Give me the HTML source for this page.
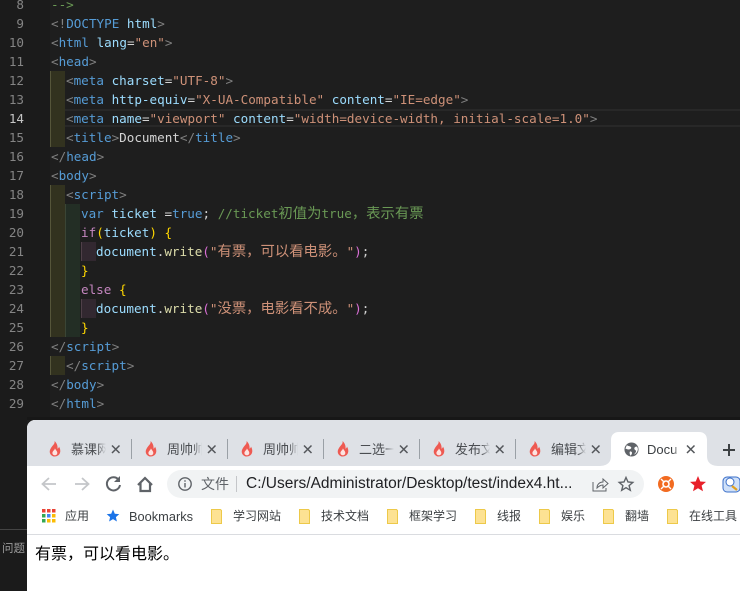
<!DOCTYPE html>
<html lang="zh"><head><meta charset="utf-8"><title>Document</title>
<style>
html,body{margin:0;padding:0;width:740px;height:591px;overflow:hidden;background:#1e1e1e}
#root{position:relative;width:740px;height:591px;overflow:hidden;background:#1e1e1e;font-family:"Liberation Sans","Noto Sans CJK SC",sans-serif}
.a{position:absolute}
.n,.l{position:absolute;height:19px;line-height:19px;font-family:"DejaVu Sans Mono","Noto Sans CJK SC",monospace;font-size:12.62px;white-space:pre}
.n{left:0;width:24px;text-align:right;color:#858585}
.z{font-family:"Noto Sans CJK SC",sans-serif;font-size:14.35px;line-height:0}
.g{color:#808080}.t{color:#569cd6}.at{color:#9cdcfe}.s{color:#ce9178}.c{color:#6a9955}.w{color:#d4d4d4}.k{color:#c586c0}.y{color:#ffd700}.f{color:#dcdcaa}.p{color:#da70d6}
.tb{position:absolute;top:441px;height:17px;width:35px;overflow:hidden;white-space:nowrap;font-size:13px;line-height:17px;color:#4a4d51;-webkit-mask-image:linear-gradient(to right,#000 75%,transparent);mask-image:linear-gradient(to right,#000 75%,transparent)}
.bm{position:absolute;top:508px;height:17px;line-height:17px;font-size:12px;color:#3c4043;white-space:nowrap}
.sep{position:absolute;top:439px;width:1px;height:20px;background:#9aa0a6}
svg{position:absolute;display:block}
</style></head><body><div id="root">

<div class="a" style="left:0;top:0;width:50px;height:420px;background:#1b1b1b"></div>
<div class="a" style="left:0;top:420px;width:27px;height:171px;background:#1b1b1b"></div>
<div class="a" style="left:51px;top:109px;width:689px;height:18px;box-sizing:border-box;border-top:2px solid #282828;border-bottom:2px solid #282828"></div>
<div class="a" style="left:50px;top:71px;width:15px;height:76px;background:#32321f;border-left:1px solid #55553a;box-sizing:border-box"></div>
<div class="a" style="left:50px;top:185px;width:15px;height:152px;background:#32321f;border-left:1px solid #55553a;box-sizing:border-box"></div>
<div class="a" style="left:65px;top:204px;width:15px;height:133px;background:#232e25;border-left:1px solid #3a4535;box-sizing:border-box"></div>
<div class="a" style="left:81px;top:242px;width:15px;height:19px;background:#322830;border-left:1px solid #4f4048;box-sizing:border-box"></div>
<div class="a" style="left:81px;top:299px;width:15px;height:19px;background:#322830;border-left:1px solid #4f4048;box-sizing:border-box"></div>
<div class="a" style="left:50px;top:356px;width:15px;height:19px;background:#32321f;border-left:1px solid #55553a;box-sizing:border-box"></div>

<div class="n" style="top:-5px">8</div><div class="l" style="left:51px;top:-5px"><span class="c">--&gt;</span></div>
<div class="n" style="top:14px">9</div><div class="l" style="left:51px;top:14px"><span class="g">&lt;!</span><span class="t">DOCTYPE</span> <span class="at">html</span><span class="g">&gt;</span></div>
<div class="n" style="top:33px">10</div><div class="l" style="left:51px;top:33px"><span class="g">&lt;</span><span class="t">html</span> <span class="at">lang</span><span class="w">=</span><span class="s">"en"</span><span class="g">&gt;</span></div>
<div class="n" style="top:52px">11</div><div class="l" style="left:51px;top:52px"><span class="g">&lt;</span><span class="t">head</span><span class="g">&gt;</span></div>
<div class="n" style="top:71px">12</div><div class="l" style="left:66px;top:71px"><span class="g">&lt;</span><span class="t">meta</span> <span class="at">charset</span><span class="w">=</span><span class="s">"UTF-8"</span><span class="g">&gt;</span></div>
<div class="n" style="top:90px">13</div><div class="l" style="left:66px;top:90px"><span class="g">&lt;</span><span class="t">meta</span> <span class="at">http-equiv</span><span class="w">=</span><span class="s">"X-UA-Compatible"</span> <span class="at">content</span><span class="w">=</span><span class="s">"IE=edge"</span><span class="g">&gt;</span></div>
<div class="n" style="top:109px;color:#c6c6c6">14</div><div class="l" style="left:66px;top:109px"><span class="g">&lt;</span><span class="t">meta</span> <span class="at">name</span><span class="w">=</span><span class="s">"viewport"</span> <span class="at">content</span><span class="w">=</span><span class="s">"width=device-width, initial-scale=1.0"</span><span class="g">&gt;</span></div>
<div class="n" style="top:128px">15</div><div class="l" style="left:66px;top:128px"><span class="g">&lt;</span><span class="t">title</span><span class="g">&gt;</span><span class="w">Document</span><span class="g">&lt;/</span><span class="t">title</span><span class="g">&gt;</span></div>
<div class="n" style="top:147px">16</div><div class="l" style="left:51px;top:147px"><span class="g">&lt;/</span><span class="t">head</span><span class="g">&gt;</span></div>
<div class="n" style="top:166px">17</div><div class="l" style="left:51px;top:166px"><span class="g">&lt;</span><span class="t">body</span><span class="g">&gt;</span></div>
<div class="n" style="top:185px">18</div><div class="l" style="left:66px;top:185px"><span class="g">&lt;</span><span class="t">script</span><span class="g">&gt;</span></div>
<div class="n" style="top:204px">19</div><div class="l" style="left:81px;top:204px"><span class="t">var</span> <span class="at">ticket</span> <span class="w">=</span><span class="t">true</span><span class="w">;</span> <span class="c">//ticket<span class="z">初值为</span>true<span class="z">，表示有票</span></span></div>
<div class="n" style="top:223px">20</div><div class="l" style="left:81px;top:223px"><span class="k">if</span><span class="y">(</span><span class="at">ticket</span><span class="y">)</span> <span class="y">{</span></div>
<div class="n" style="top:242px">21</div><div class="l" style="left:96px;top:242px"><span class="at">document</span><span class="w">.</span><span class="f">write</span><span class="p">(</span><span class="s">"<span class="z">有票，可以看电影。</span>"</span><span class="p">)</span><span class="w">;</span></div>
<div class="n" style="top:261px">22</div><div class="l" style="left:81px;top:261px"><span class="y">}</span></div>
<div class="n" style="top:280px">23</div><div class="l" style="left:81px;top:280px"><span class="k">else</span> <span class="y">{</span></div>
<div class="n" style="top:299px">24</div><div class="l" style="left:96px;top:299px"><span class="at">document</span><span class="w">.</span><span class="f">write</span><span class="p">(</span><span class="s">"<span class="z">没票，电影看不成。</span>"</span><span class="p">)</span><span class="w">;</span></div>
<div class="n" style="top:318px">25</div><div class="l" style="left:81px;top:318px"><span class="y">}</span></div>
<div class="n" style="top:337px">26</div><div class="l" style="left:51px;top:337px"><span class="g">&lt;/</span><span class="t">script</span><span class="g">&gt;</span></div>
<div class="n" style="top:356px">27</div><div class="l" style="left:66px;top:356px"><span class="g">&lt;/</span><span class="t">script</span><span class="g">&gt;</span></div>
<div class="n" style="top:375px">28</div><div class="l" style="left:51px;top:375px"><span class="g">&lt;/</span><span class="t">body</span><span class="g">&gt;</span></div>
<div class="n" style="top:394px">29</div><div class="l" style="left:51px;top:394px"><span class="g">&lt;/</span><span class="t">html</span><span class="g">&gt;</span></div>

<!-- bottom left panel -->
<div class="a" style="left:27px;top:417px;width:713px;height:3px;background:#171717"></div>
<div class="a" style="left:0;top:529px;width:27px;height:1px;background:#444"></div>
<div class="a" style="left:2px;top:541px;font-size:11.5px;line-height:16px;color:#9a9a9a">问题</div>

<!-- browser -->
<div class="a" style="left:27px;top:420px;width:713px;height:171px;background:#fff;border-top-left-radius:8px;overflow:hidden">
  <div class="a" style="left:0;top:0;width:713px;height:46px;background:#dee1e6"></div>
  <div class="a" style="left:0;top:114px;width:713px;height:1px;background:#dadce0"></div>
</div>

<!-- tab flames -->
<svg width="740" height="591" style="left:0;top:0" viewBox="0 0 740 591">
  <defs><g id="fl"><path d="M5.500 0C6.300 2.600 3.800 4.200 2.200 6.600.7 8.800.4 10.600 1 12.200c.8 2 2.600 3.300 4.700 3.300 2.400 0 4.600-1.400 5.300-3.600.7-2.100.2-4.400-1-6.300-.2 1-.7 1.700-1.500 2.100C8.900 4.700 7.700 2 5.500 0z" fill="#ee5a52"/><path d="M5.900 7.300c.2 1.500-2.300 2.600-2.500 4.500-.1 1.500 1.100 2.500 2.500 2.500s2.500-1 2.400-2.500c-.1-1.700-1.700-2.800-2.400-4.500z" fill="#fde3e0"/></g></defs>
  <use href="#fl" x="49" y="441"/><use href="#fl" x="145" y="441"/><use href="#fl" x="241" y="441"/><use href="#fl" x="337" y="441"/><use href="#fl" x="433" y="441"/><use href="#fl" x="529" y="441"/>
</svg>
<div class="tb" style="left:71px">慕课网</div>
<div class="tb" style="left:167px">周帅帅</div>
<div class="tb" style="left:263px">周帅帅</div>
<div class="tb" style="left:359px">二选一</div>
<div class="tb" style="left:455px">发布文</div>
<div class="tb" style="left:551px">编辑文</div>
<div class="sep" style="left:131px"></div><div class="sep" style="left:227px"></div><div class="sep" style="left:323px"></div><div class="sep" style="left:419px"></div><div class="sep" style="left:515px"></div>

<!-- active tab -->
<svg width="120" height="36" style="left:599px;top:432px" viewBox="0 0 120 36"><path d="M0 34c6 0 12-2 12-10V8c0-5 3-8 8-8h80c5 0 8 3 8 8v16c0 8 6 10 12 10z" fill="#fff"/></svg>
<svg width="15" height="15" style="left:624px;top:442px" viewBox="0 0 16 16"><circle cx="8" cy="8" r="7.500" fill="#5f6368"/><path d="M3 3.500c1.500 1 3.500.8 4.500 2S6.500 8 5 8 2.500 7 1.500 7zM14 5c-1.500-.5-3 .5-3 2s2 1.500 1.800 3-1.800 2.500-2.300 3.500c2.500-1 4-3 4.300-5.500.1-1.100-.3-2.100-.8-3zM6.500 10c1.200 0 2.300.7 2 2s-1 2-1.500 2.700C6.200 13.500 5.500 11 6.500 10z" fill="#fff"/></svg>
<div class="tb" style="left:647px;width:34px;color:#3c4043">Docu</div>

<!-- close icons -->
<svg width="740" height="591" style="left:0;top:0" viewBox="0 0 740 591"><g stroke="#54575b" stroke-width="1.500" fill="none">
<path d="M112 445.500l7.500 7.500M119.500 445.500l-7.500 7.500"/>
<path d="M208 445.500l7.500 7.500M215.500 445.500l-7.500 7.500"/>
<path d="M304 445.500l7.500 7.500M311.500 445.500l-7.500 7.500"/>
<path d="M400 445.500l7.500 7.500M407.500 445.500l-7.500 7.500"/>
<path d="M496 445.500l7.500 7.500M503.500 445.500l-7.500 7.500"/>
<path d="M592 445.500l7.500 7.500M599.500 445.500l-7.500 7.500"/>
<path d="M687 445.500l7.500 7.500M694.500 445.500l-7.500 7.500"/>
<path d="M729 444v12M723 450h12" stroke-width="2" stroke="#3c4043"/>
</g></svg>

<!-- toolbar -->
<div class="a" style="left:167px;top:470px;width:477px;height:28px;border-radius:14px;background:#f1f3f4"></div>
<svg width="740" height="591" style="left:0;top:0" viewBox="0 0 740 591">
  <g fill="none" stroke="#c4c6c9" stroke-width="1.800"><path d="M56 484H43M49 478l-6.500 6 6.500 6"/><path d="M75 484h13M82 478l6.500 6-6.500 6"/></g>
  <path d="M118.500 479.500a6.600 6.600 0 1 0 1.500 5.500" fill="none" stroke="#5f6368" stroke-width="2"/><path d="M120 476v6h-6z" fill="#5f6368"/>
  <path d="M138 485l7-7 7 7M140.500 483v8h9.500v-8" fill="none" stroke="#5f6368" stroke-width="2.200"/>
  <circle cx="185" cy="484" r="6.200" fill="none" stroke="#5f6368" stroke-width="1.400"/><path d="M185 483v4.500M185 480.300v1.500" stroke="#5f6368" stroke-width="1.400"/>
  <path d="M236.500 476v16" stroke="#c4c6c9"/>
  <path d="M593 482v9h13v-3" fill="none" stroke="#5f6368" stroke-width="1"/><path d="M597 488c0-4 3-6 6-6v-3l5 4.500-5 4.500v-3c-2 0-4 1-6 3z" fill="none" stroke="#5f6368" stroke-width="1"/>
  <path d="M626 477.500l2 4.500 4.800.4-3.700 3.200 1.200 4.700-4.300-2.600-4.300 2.600 1.200-4.700-3.700-3.200 4.800-.4z" fill="none" stroke="#5f6368" stroke-width="1.400"/>
  <circle cx="666" cy="484" r="8" fill="#f26b21"/><circle cx="666" cy="484" r="3" fill="none" stroke="#fff" stroke-width="1.600"/><path d="M661 479l2.500 2.500M671 479l-2.500 2.500M661 489l2.500-2.500M671 489l-2.500-2.500" stroke="#fff" stroke-width="1.400"/>
  <path d="M698 476l2.300 5.500 5.700.4-4.400 3.700 1.400 5.600-5-3-5 3 1.400-5.600-4.400-3.700 5.700-.4z" fill="#e8202a"/>
  <rect x="723" y="477" width="17" height="15" rx="4" fill="#cfe0f8" stroke="#3b6fc9"/><circle cx="730" cy="482" r="4" fill="#fff" stroke="#3b6fc9"/><path d="M732 486l5 4" stroke="#e0a020" stroke-width="2.200"/>
</svg>
<div class="a" style="left:201px;top:475px;font-size:14px;line-height:18px;color:#5f6368">文件</div>
<div class="a" style="left:246px;top:475px;font-size:15.5px;line-height:18px;color:#202124;white-space:nowrap">C:/Users/Administrator/Desktop/test/index4.ht...</div>

<!-- bookmarks -->
<svg width="740" height="591" style="left:0;top:0" viewBox="0 0 740 591">
  <g>
  <rect x="42" y="509" width="3.500" height="3.500" fill="#ea4335"/><rect x="47" y="509" width="3.500" height="3.500" fill="#ea4335"/><rect x="52" y="509" width="3.500" height="3.500" fill="#ea4335"/>
  <rect x="42" y="514" width="3.500" height="3.500" fill="#34a853"/><rect x="47" y="514" width="3.500" height="3.500" fill="#4285f4"/><rect x="52" y="514" width="3.500" height="3.500" fill="#fbbc05"/>
  <rect x="42" y="519" width="3.500" height="3.500" fill="#34a853"/><rect x="47" y="519" width="3.500" height="3.500" fill="#fbbc05"/><rect x="52" y="519" width="3.500" height="3.500" fill="#fbbc05"/>
  </g>
  <path d="M113 509.500l1.800 4.200 4.500.4-3.400 3 1 4.400-3.900-2.400-3.900 2.400 1-4.400-3.400-3 4.500-.4z" fill="#1a73e8"/>
  <defs><path id="fd" d="M.5.500h9l1 1v13h-10z" fill="#fde293" stroke="#edc949"/></defs>
  <use href="#fd" x="211" y="509"/><use href="#fd" x="299" y="509"/><use href="#fd" x="387" y="509"/><use href="#fd" x="475" y="509"/><use href="#fd" x="539" y="509"/><use href="#fd" x="603" y="509"/><use href="#fd" x="667" y="509"/>
</svg>
<div class="bm" style="left:65px">应用</div>
<div class="bm" style="left:129px;font-size:12.8px">Bookmarks</div>
<div class="bm" style="left:233px">学习网站</div>
<div class="bm" style="left:321px">技术文档</div>
<div class="bm" style="left:409px">框架学习</div>
<div class="bm" style="left:497px">线报</div>
<div class="bm" style="left:561px">娱乐</div>
<div class="bm" style="left:625px">翻墙</div>
<div class="bm" style="left:689px">在线工具</div>

<div class="a" style="left:35px;top:544px;font-size:16px;line-height:22px;color:#000;white-space:nowrap">有票，可以看电影。</div>
</div></body></html>
